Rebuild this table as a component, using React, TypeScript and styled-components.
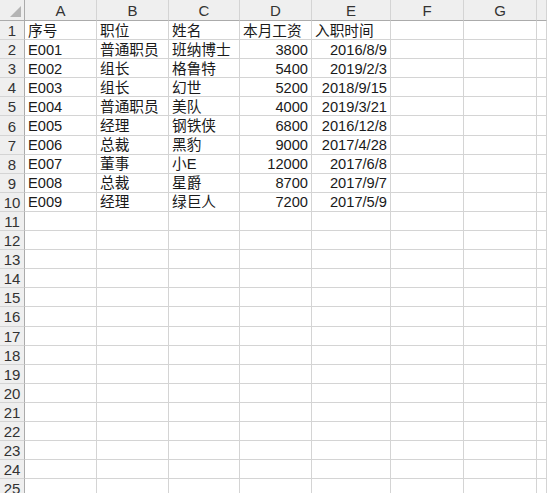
import React from "react";
import styled, { createGlobalStyle } from "styled-components";

const Global = createGlobalStyle`
  html, body {
    margin: 0;
    padding: 0;
    background: #ffffff;
    overflow: hidden;
  }
  * { box-sizing: border-box; }
`;

const COLS = [25, 72, 72, 71, 72, 79, 73, 73];
const LETTERS = ["A", "B", "C", "D", "E", "F", "G", ""];
const ROW_COUNT = 25;

const Sheet = styled.div`
  display: grid;
  grid-template-columns: ${COLS.map((c) => `${c}px`).join(" ")} 1fr;
  grid-template-rows: 21px repeat(${ROW_COUNT}, 19.1px);
  width: 547px;
  height: 493px;
  overflow: hidden;
  font-family: "Liberation Sans", "Noto Sans CJK SC", sans-serif;
  font-size: 14.67px;
  color: #1a1a1a;
`;

const Corner = styled.div`
  background: #efefef;
  border-right: 1px solid #ababab;
  border-bottom: 1px solid #ababab;
  display: flex;
  align-items: flex-end;
  justify-content: flex-end;
  padding: 0 3px 3px 0;
`;

const Triangle = styled.div`
  width: 0;
  height: 0;
  border-left: 11px solid transparent;
  border-bottom: 11px solid #b4b4b4;
`;

const ColHead = styled.div`
  background: #efefef;
  border-right: 1px solid #d4d4d4;
  border-bottom: 1px solid #ababab;
  display: flex;
  align-items: center;
  justify-content: center;
  color: #333333;
  font-size: 15px;
  line-height: 20px;
  padding-top: 1px;
`;

const RowHead = styled.div`
  background: #efefef;
  border-right: 1px solid #ababab;
  border-bottom: 1px solid #d4d4d4;
  display: flex;
  align-items: center;
  justify-content: center;
  color: #333333;
  font-size: 15px;
  line-height: 19px;
  padding-top: 1px;
`;

const Cell = styled.div<{ $num?: boolean }>`
  border-right: 1px solid #d4d4d4;
  border-bottom: 1px solid #d4d4d4;
  display: flex;
  align-items: center;
  justify-content: ${(p) => (p.$num ? "flex-end" : "flex-start")};
  padding: 1px 3px 0 3px;
  white-space: nowrap;
  overflow: visible;
  line-height: 18px;
`;

const DATA: (string | number)[][] = [
  ["序号", "职位", "姓名", "本月工资", "入职时间"],
  ["E001", "普通职员", "班纳博士", 3800, "2016/8/9"],
  ["E002", "组长", "格鲁特", 5400, "2019/2/3"],
  ["E003", "组长", "幻世", 5200, "2018/9/15"],
  ["E004", "普通职员", "美队", 4000, "2019/3/21"],
  ["E005", "经理", "钢铁侠", 6800, "2016/12/8"],
  ["E006", "总裁", "黑豹", 9000, "2017/4/28"],
  ["E007", "董事", "小E", 12000, "2017/6/8"],
  ["E008", "总裁", "星爵", 8700, "2017/9/7"],
  ["E009", "经理", "绿巨人", 7200, "2017/5/9"],
];

const isRight = (v: string | number) =>
  typeof v === "number" || /^\d{4}\/\d+\/\d+$/.test(String(v));

export default function App() {
  const cells: React.ReactNode[] = [];
  cells.push(
    <Corner key="corner">
      <Triangle />
    </Corner>
  );
  LETTERS.forEach((l, i) => cells.push(<ColHead key={`h${i}`}>{l}</ColHead>));
  for (let r = 0; r < ROW_COUNT; r++) {
    cells.push(<RowHead key={`r${r}`}>{r + 1}</RowHead>);
    const row = DATA[r] || [];
    for (let c = 0; c < LETTERS.length; c++) {
      const v = row[c];
      cells.push(
        <Cell key={`c${r}-${c}`} $num={v !== undefined && isRight(v)}>
          {v !== undefined ? String(v) : ""}
        </Cell>
      );
    }
  }
  return (
    <>
      <Global />
      <Sheet>{cells}</Sheet>
    </>
  );
}
